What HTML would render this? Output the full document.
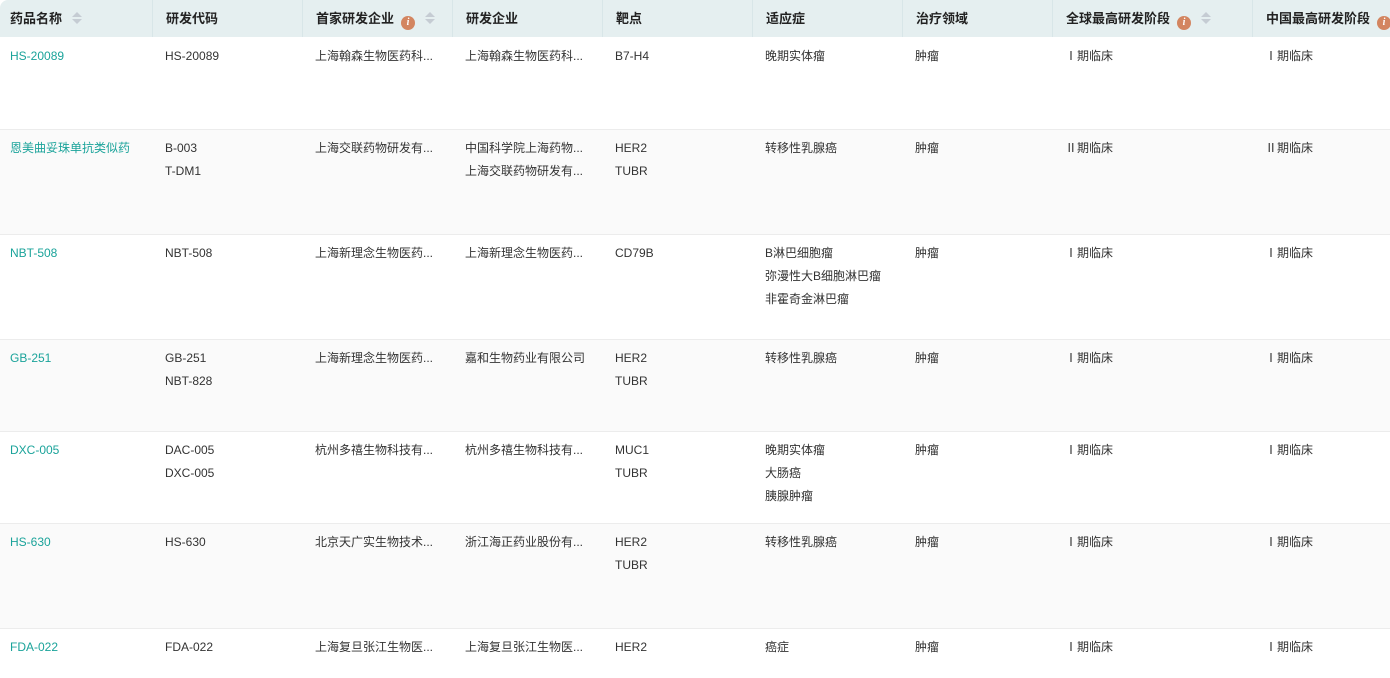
<!DOCTYPE html>
<html><head><meta charset="utf-8"><style>
body{margin:0;width:1390px;height:678px;overflow:hidden;background:#fff;font-family:"Liberation Sans","Noto Sans CJK SC",sans-serif;font-size:12px;color:#333}
.hd{position:absolute;left:0;top:0;width:1390px;height:37px;background:#e5eff0;border-radius:8px 0 0 0}
.hc{position:absolute;top:0;height:37px;line-height:37px;font-size:13px;font-weight:bold;color:#222;border-left:1px solid #d8e6e8;padding-left:13px;box-sizing:border-box;white-space:nowrap}
.i{display:inline-block;width:14px;height:14px;border-radius:50%;background:#d38560;color:#fff;font:italic bold 10px/14px "Liberation Serif",serif;text-align:center;vertical-align:-2px;margin-left:7px}
.s{display:inline-block;width:10px;height:13px;vertical-align:-2px;margin-left:10px;position:relative}
.s:before{content:"";position:absolute;left:0;top:0;border:5px solid transparent;border-bottom:5px solid #c5ccd3;border-top:0}
.s:after{content:"";position:absolute;left:0;top:7px;border:5px solid transparent;border-top:5px solid #c5ccd3;border-bottom:0}
.r{position:absolute;left:0;width:1390px;border-bottom:1px solid #ececec;box-sizing:border-box}
.g{background:#fafafa}
.c{position:absolute;line-height:23px;white-space:nowrap}
.l{color:#1aa39a}
</style></head><body>
<div class="hd"></div>
<div class="hc" style="left:0;width:152px;border:0;padding-left:10px">药品名称<span class="s"></span></div>
<div class="hc" style="left:152px">研发代码</div>
<div class="hc" style="left:302px">首家研发企业<span class="i">i</span><span class="s"></span></div>
<div class="hc" style="left:452px">研发企业</div>
<div class="hc" style="left:602px">靶点</div>
<div class="hc" style="left:752px">适应症</div>
<div class="hc" style="left:902px">治疗领域</div>
<div class="hc" style="left:1052px">全球最高研发阶段<span class="i">i</span><span class="s"></span></div>
<div class="hc" style="left:1252px">中国最高研发阶段<span class="i">i</span></div>

<div class="r" style="top:37px;height:93px"></div>
<div class="r g" style="top:130px;height:105px"></div>
<div class="r" style="top:235px;height:105px"></div>
<div class="r g" style="top:340px;height:92px"></div>
<div class="r" style="top:432px;height:92px"></div>
<div class="r g" style="top:524px;height:105px"></div>
<div class="r" style="top:629px;height:49px;border:0"></div>

<div id="rows"></div>
<script>
var rows=[
[45,["HS-20089"],["HS-20089"],"上海翰森生物医药科...","上海翰森生物医药科...",["B7-H4"],["晚期实体瘤"],"Ⅰ期临床"],
[137,["恩美曲妥珠单抗类似药"],["B-003","T-DM1"],"上海交联药物研发有...","中国科学院上海药物...<br>上海交联药物研发有...",["HER2","TUBR"],["转移性乳腺癌"],"Ⅱ期临床"],
[242,["NBT-508"],["NBT-508"],"上海新理念生物医药...","上海新理念生物医药...",["CD79B"],["B淋巴细胞瘤","弥漫性大B细胞淋巴瘤","非霍奇金淋巴瘤"],"Ⅰ期临床"],
[347,["GB-251"],["GB-251","NBT-828"],"上海新理念生物医药...","嘉和生物药业有限公司",["HER2","TUBR"],["转移性乳腺癌"],"Ⅰ期临床"],
[439,["DXC-005"],["DAC-005","DXC-005"],"杭州多禧生物科技有...","杭州多禧生物科技有...",["MUC1","TUBR"],["晚期实体瘤","大肠癌","胰腺肿瘤"],"Ⅰ期临床"],
[531,["HS-630"],["HS-630"],"北京天广实生物技术...","浙江海正药业股份有...",["HER2","TUBR"],["转移性乳腺癌"],"Ⅰ期临床"],
[636,["FDA-022"],["FDA-022"],"上海复旦张江生物医...","上海复旦张江生物医...",["HER2"],["癌症"],"Ⅰ期临床"]];
var h="";
rows.forEach(function(r){var t=r[0];
function c(x,html,cls){h+='<div class="c '+(cls||'')+'" style="left:'+x+'px;top:'+t+'px">'+html+'</div>';}
c(10,r[1].join("<br>"),"l");c(165,r[2].join("<br>"));c(315,r[3]);c(465,r[4]);c(615,r[5].join("<br>"));c(765,r[6].join("<br>"));c(915,"肿瘤");c(1065,r[7]);c(1265,r[7]);});
document.getElementById("rows").innerHTML=h;
</script>
</body></html>
